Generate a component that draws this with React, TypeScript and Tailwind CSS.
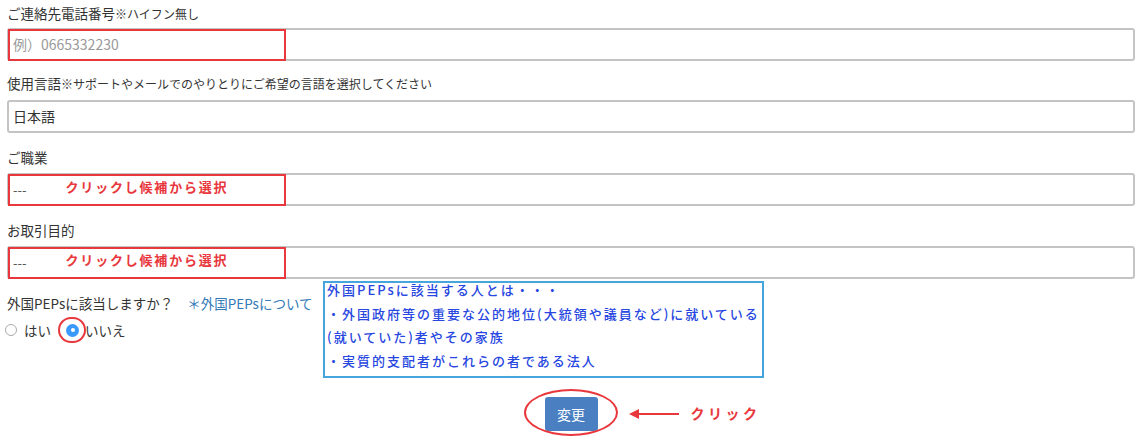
const jp = "font-['Noto_Sans_CJK_JP',sans-serif]";

function Label({ main, note }: { main: string; note?: string }) {
  return (
    <div className="h-[18px] leading-[18px] text-[13.5px] text-[#333]">
      {main}
      {note && <span className="text-[12px]">{note}</span>}
    </div>
  );
}

function Field({ children }: { children: React.ReactNode }) {
  return (
    <div className="relative h-[33px] rounded-[3px] border-2 border-[#c4c4c4] bg-white px-[4px] flex items-center text-[14px] text-[#333]">
      {children}
    </div>
  );
}

function RedBox() {
  return (
    <div className="absolute left-[-1px] top-[-1px] w-[278px] h-[32px] border-2 border-[#e8383d]" />
  );
}

function PickField() {
  return (
    <Field>
      <RedBox />
      <span className="text-[#555] text-[13px]">---</span>
      <span className="ml-[39px] mt-[-5px] text-[#e8383d] font-bold text-[13px] tracking-[1.8px]">
        クリックし候補から選択
      </span>
    </Field>
  );
}

export default function App() {
  return (
    <div className={`${jp} bg-white w-[1147px] h-[441px] pl-[7px] pr-[12px] pt-[4px]`}>
      <Label main="ご連絡先電話番号" note="※ハイフン無し" />
      <div className="mt-[6px]">
        <Field>
          <RedBox />
          <span className="text-[#999]">例）0665332230</span>
        </Field>
      </div>

      <div className="mt-[13px]">
        <Label main="使用言語" note="※サポートやメールでのやりとりにご希望の言語を選択してください" />
      </div>
      <div className="mt-[8px]">
        <Field>
          <span>日本語</span>
        </Field>
      </div>

      <div className="mt-[15px]">
        <Label main="ご職業" />
      </div>
      <div className="mt-[7px]">
        <PickField />
      </div>

      <div className="mt-[15px]">
        <Label main="お取引目的" />
      </div>
      <div className="mt-[7px]">
        <PickField />
      </div>

      <div className="relative mt-[15px]">
        <div className="flex items-center h-[18px] leading-[18px] text-[13.5px] text-[#333]">
          <span>外国PEPsに該当しますか？</span>
          <span className="ml-[14px] text-[#337ab7]">＊外国PEPsについて</span>
        </div>
        <div className="mt-[9px] flex items-center h-[18px] text-[13.5px] text-[#333]">
          <span className="w-[12px] h-[12px] rounded-full border border-[#aaa] bg-white ml-[-2px]" />
          <span className="ml-[7px]">はい</span>
          <span className="relative ml-[15px] w-[13px] h-[13px] rounded-full bg-[#3b99fc] flex items-center justify-center">
            <span className="w-[4px] h-[4px] rounded-full bg-white" />
            <span className="absolute left-[-8px] top-[-7px] w-[28px] h-[26px] rounded-full border-2 border-[#e8383d]" />
          </span>
          <span className="ml-[6px]">いいえ</span>
        </div>

        <div className="absolute left-[316px] top-[-13px] w-[441px] h-[97px] border-2 border-[#45a5dc] bg-white px-[2px] text-[13px] font-medium leading-[23.5px] tracking-[2px] text-[#2747e0]">
          <div className="mt-[-5px]">
            <div>外国PEPsに該当する人とは・・・</div>
            <div>・外国政府等の重要な公的地位(大統領や議員など)に就いている</div>
            <div>(就いていた)者やその家族</div>
            <div>・実質的支配者がこれらの者である法人</div>
          </div>
        </div>

        <div className="mt-[58px] flex justify-center">
          <div className="relative">
            <button className="w-[53px] h-[34px] rounded-[3px] bg-[#4a80c2] text-white text-[14px]">
              変更
            </button>
            <span className="absolute left-[-21px] top-[-8px] w-[94px] h-[47px] rounded-[50%] border-2 border-[#e8383d]" />
            <span className="absolute left-[86px] top-[16px] w-[48px] h-[2px] bg-[#e8383d]" />
            <span className="absolute left-[84px] top-[12px] w-0 h-0 border-y-[5px] border-y-transparent border-r-[10px] border-r-[#e8383d]" />
            <span className="absolute left-[146px] top-[6px] whitespace-nowrap text-[#e8383d] font-bold text-[14px] tracking-[3.5px]">
              クリック
            </span>
          </div>
        </div>
      </div>
    </div>
  );
}
